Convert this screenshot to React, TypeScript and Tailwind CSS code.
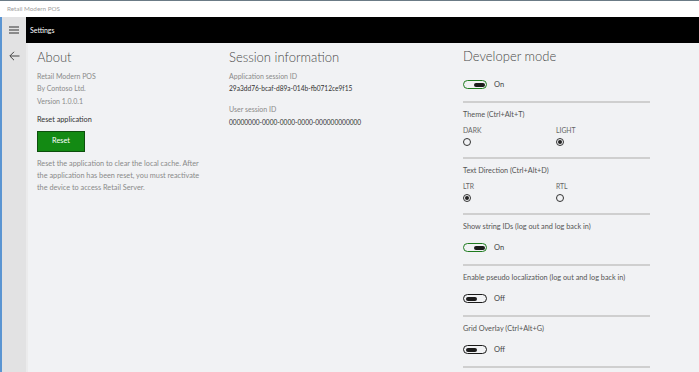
import React from "react";

const font = { fontFamily: 'Lato, "Open Sans", sans-serif' };

function Toggle({ on, label }: { on: boolean; label: string }) {
  return (
    <div className="flex h-[10px] shrink-0 items-center gap-[7px]">
      <div
        className={
          "flex h-[9px] w-[24px] items-center rounded-full border-[1.5px] px-[1.5px] " +
          (on ? "justify-end border-[#1e7b1e]" : "justify-start border-[#1a1a1a]")
        }
      >
        <div className="h-[4px] w-[11px] rounded-full bg-[#1c1c1c]" />
      </div>
      <span className="text-[7.5px] leading-[10px] text-[#444]">{label}</span>
    </div>
  );
}

function Radio({ checked }: { checked: boolean }) {
  return (
    <div className="flex h-[8px] w-[8px] items-center justify-center rounded-full border border-[#333]">
      {checked && <div className="h-[4px] w-[4px] rounded-full bg-[#222]" />}
    </div>
  );
}

function Sep() {
  return <div className="h-[2px] w-[187px] shrink-0 bg-[#cfcfcf]" />;
}

function RadioSection({
  title,
  a,
  b,
  checkedA,
}: {
  title: string;
  a: string;
  b: string;
  checkedA: boolean;
}) {
  return (
    <div className="flex shrink-0 flex-col">
      <div className="mt-[6px] text-[7.3px] leading-[12px] text-[#555]">{title}</div>
      <div className="mt-[3px] flex">
        <div className="flex w-[93px] flex-col">
          <div className="text-[6.8px] leading-[12px] text-[#666]">{a}</div>
          <div className="mt-[2px]">
            <Radio checked={checkedA} />
          </div>
        </div>
        <div className="flex flex-col">
          <div className="text-[6.8px] leading-[12px] text-[#666]">{b}</div>
          <div className="mt-[2px]">
            <Radio checked={!checkedA} />
          </div>
        </div>
      </div>
      <div className="mt-[11px]">
        <Sep />
      </div>
    </div>
  );
}

function ToggleSection({ title, on }: { title: string; on: boolean }) {
  return (
    <div className="flex shrink-0 flex-col">
      <div className="mt-[6px] text-[7.3px] leading-[12px] text-[#555]">{title}</div>
      <div className="mt-[10px]">
        <Toggle on={on} label={on ? "On" : "Off"} />
      </div>
      <div className="mt-[11px]">
        <Sep />
      </div>
    </div>
  );
}

export default function App() {
  return (
    <div
      className="flex h-[372px] w-[699px] flex-col overflow-hidden bg-[#f1f2f4]"
      style={font}
    >
      {/* title bar */}
      <div className="flex h-[17px] shrink-0 items-center border-t border-[#6b7b86] bg-white pl-[7px]">
        <span className="text-[6.3px] leading-[10px] text-[#a0a0a0]">Retail Modern POS</span>
      </div>
      <div className="flex min-h-0 flex-1">
        {/* left rail */}
        <div className="flex w-[26px] shrink-0 flex-col items-center border-l-2 border-[#5b95d2] bg-[#e2e2e3]">
          <div className="flex h-[26px] shrink-0 items-center justify-center">
            <svg width="10" height="8" viewBox="0 0 10 8">
              <path d="M0 1h10M0 4h10M0 7h10" stroke="#333" strokeWidth="1" />
            </svg>
          </div>
          <div className="mt-[8px] flex items-center justify-center">
            <svg width="11" height="10" viewBox="0 0 11 10">
              <path
                d="M10.5 5H1M5 0.8L0.8 5L5 9.2"
                stroke="#444"
                strokeWidth="1"
                fill="none"
              />
            </svg>
          </div>
        </div>
        <div className="flex min-h-0 flex-1 flex-col">
          <div className="flex h-[26px] shrink-0 items-center bg-black pl-[4px]">
            <span className="text-[7px] leading-[10px] text-white">Settings</span>
          </div>
          <div className="flex min-h-0 flex-1 border-l-2 border-[#ebebec] pl-[9px]">
            {/* About */}
            <div className="flex w-[192px] shrink-0 flex-col">
              <div className="mt-[4px] text-[13px] font-light leading-[20px] text-[#4a4a4a]">
                About
              </div>
              <div className="mt-[2.5px] text-[7px] leading-[12.5px] text-[#8a8a8a]">
                <div>Retail Modern POS</div>
                <div>By Contoso Ltd.</div>
                <div>Version 1.0.0.1</div>
              </div>
              <div className="mt-[6.5px] text-[7.3px] leading-[12px] text-[#333]">
                Reset application
              </div>
              <div className="mt-[5px] flex h-[21px] w-[48px] items-center justify-center border border-[#0d4f0d] bg-[#138a13] text-[7.3px] text-white">
                Reset
              </div>
              <div className="mt-[6px] w-[168px] text-[7.3px] leading-[12px] text-[#8a8a8a]">
                Reset the application to clear the local cache. After the application has been
                reset, you must reactivate the device to access Retail Server.
              </div>
            </div>
            {/* Session */}
            <div className="flex w-[234px] shrink-0 flex-col">
              <div className="mt-[4px] text-[13px] font-light leading-[20px] text-[#4a4a4a]">
                Session information
              </div>
              <div className="mt-[2.5px] text-[7px] leading-[12.5px] text-[#8a8a8a]">
                Application session ID
              </div>
              <div className="text-[6.6px] leading-[12.5px] text-[#333]">
                29a3dd76-bcaf-d89a-014b-fb0712ce9f15
              </div>
              <div className="mt-[8.5px] text-[7px] leading-[12.5px] text-[#8a8a8a]">
                User session ID
              </div>
              <div className="text-[6.6px] leading-[12.5px] text-[#333]">
                00000000-0000-0000-0000-000000000000
              </div>
            </div>
            {/* Developer */}
            <div className="flex flex-col">
              <div className="mt-[3px] shrink-0 text-[13px] font-light leading-[20px] text-[#4a4a4a]">
                Developer mode
              </div>
              <div className="mt-[13.5px]">
                <Toggle on={true} label="On" />
              </div>
              <div className="mt-[11px]">
                <Sep />
              </div>
              <RadioSection title="Theme (Ctrl+Alt+T)" a="DARK" b="LIGHT" checkedA={false} />
              <RadioSection
                title="Text Direction (Ctrl+Alt+D)"
                a="LTR"
                b="RTL"
                checkedA={true}
              />
              <ToggleSection title="Show string IDs (log out and log back in)" on={true} />
              <ToggleSection
                title="Enable pseudo localization (log out and log back in)"
                on={false}
              />
              <ToggleSection title="Grid Overlay (Ctrl+Alt+G)" on={false} />
            </div>
          </div>
        </div>
      </div>
    </div>
  );
}
